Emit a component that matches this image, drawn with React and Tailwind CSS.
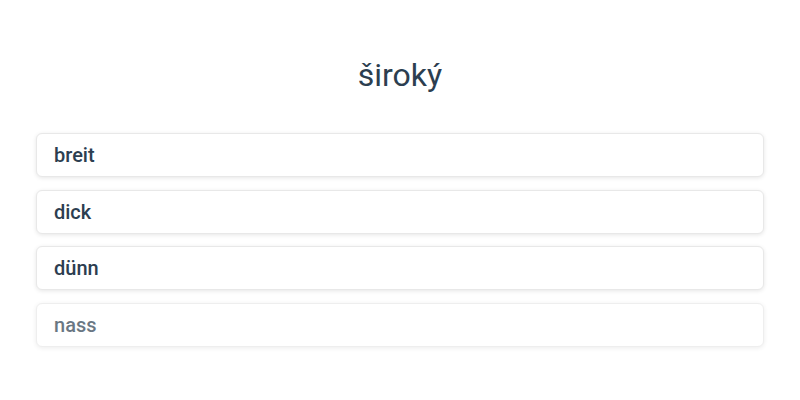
export default function App() {
  const opts = [
    { t: "breit", faded: false },
    { t: "dick", faded: false },
    { t: "dünn", faded: false },
    { t: "nass", faded: true },
  ];
  return (
    <div className="w-[800px] h-[400px] bg-white px-9 pt-[51px]" style={{ fontFamily: "Roboto, 'Noto Sans', sans-serif" }}>
      <h1 className="text-center text-[32px] leading-[48px] text-[#2c3e50] font-normal">široký</h1>
      <div className="mt-[34px] flex flex-col gap-[12.5px]">
        {opts.map((o) => (
          <div
            key={o.t}
            className={`h-[44px] rounded-md border border-[#e8e8e8] bg-white shadow-[0_1px_4px_rgba(0,0,0,0.1)] flex items-center px-[17px] text-[20px] font-medium text-[#2c3e50] ${o.faded ? "opacity-70" : ""}`}
          >
            {o.t}
          </div>
        ))}
      </div>
    </div>
  );
}
